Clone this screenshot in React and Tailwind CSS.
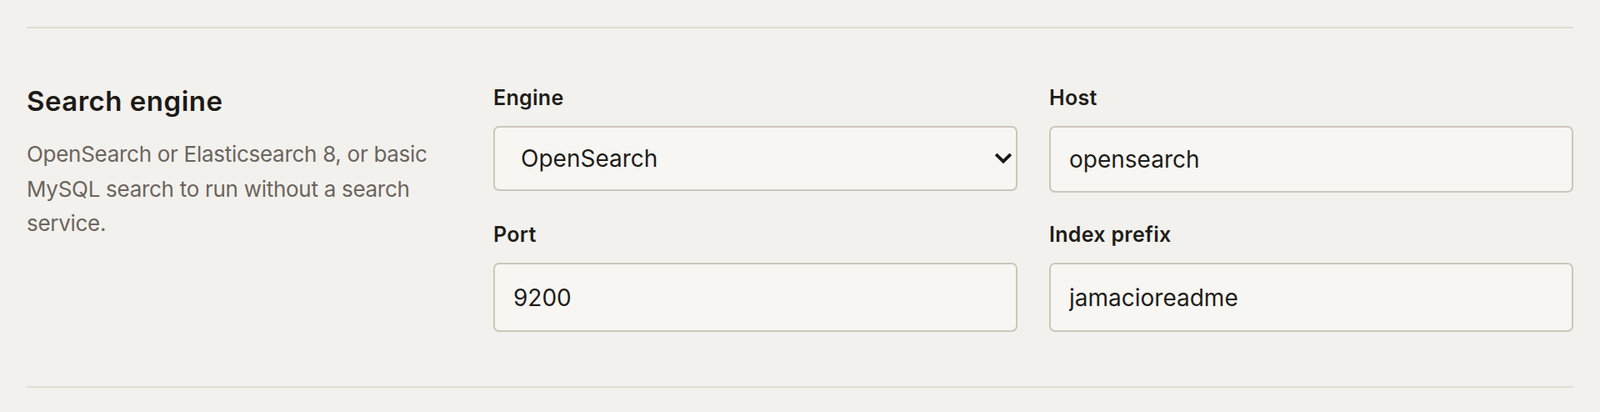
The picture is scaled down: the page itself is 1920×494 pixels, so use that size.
import React from "react";

const font = { fontFamily: 'Inter, "Liberation Sans", Arial, sans-serif' };

function Label({ children }) {
  return (
    <label className="block text-[25px] leading-[32px] font-semibold tracking-[0.012em] text-[#1f1d1a] mb-[18px]">
      {children}
    </label>
  );
}

function TextInput({ value, tall }) {
  return (
    <input
      readOnly
      value={value}
      style={font}
      className={
        "block w-full rounded-[7px] border-2 border-[#cdc6bc] bg-[#f7f6f2] pl-[22px] pr-4 text-[28px] text-[#1f1d1a] outline-none " +
        (tall ? "h-[83px]" : "h-[80px]")
      }
    />
  );
}

export default function App() {
  return (
    <div className="min-h-screen bg-[#f3f1ed] px-8 pt-8" style={font}>
      <div className="border-t-2 border-[#e2ddd6]" />
      <section className="flex gap-16 pt-[67px] pb-[65px]">
        <div className="w-[496px] shrink-0">
          <h2 className="text-[33px] leading-[40px] font-semibold tracking-[0.015em] text-[#1c1a17]">Search engine</h2>
          <p className="mt-[23px] text-[26px] leading-[41.6px] tracking-[-0.011em] text-[#6b655e]">
            OpenSearch or Elasticsearch 8, or basic MySQL search to run without a search service.
          </p>
        </div>
        <div className="flex-1 grid grid-cols-2 gap-x-[38px] gap-y-[34px]">
          <div>
            <Label>Engine</Label>
            <div className="relative">
              <select
                defaultValue="opensearch"
                className="block w-full h-[78px] appearance-none rounded-[7px] border-2 border-[#cdc6bc] bg-[#f7f6f2] pl-[31px] pr-12 text-[28px] text-[#1f1d1a] outline-none"
                style={font}
              >
                <option value="opensearch">OpenSearch</option>
                <option value="elasticsearch">Elasticsearch 8</option>
                <option value="mysql">MySQL</option>
              </select>
              <svg
                className="pointer-events-none absolute right-[7px] top-1/2 -translate-y-1/2"
                width="20"
                height="13"
                viewBox="0 0 20 13"
                fill="none"
              >
                <path d="M2.5 2.8 L10 10.2 L17.5 2.8" stroke="#1a1816" strokeWidth="3.8" strokeLinecap="square" />
              </svg>
            </div>
          </div>
          <div>
            <Label>Host</Label>
            <TextInput value="opensearch" />
          </div>
          <div>
            <Label>Port</Label>
            <TextInput value="9200" tall />
          </div>
          <div>
            <Label>Index prefix</Label>
            <TextInput value="jamacioreadme" tall />
          </div>
        </div>
      </section>
      <div className="border-t-2 border-[#e2ddd6]" />
    </div>
  );
}
